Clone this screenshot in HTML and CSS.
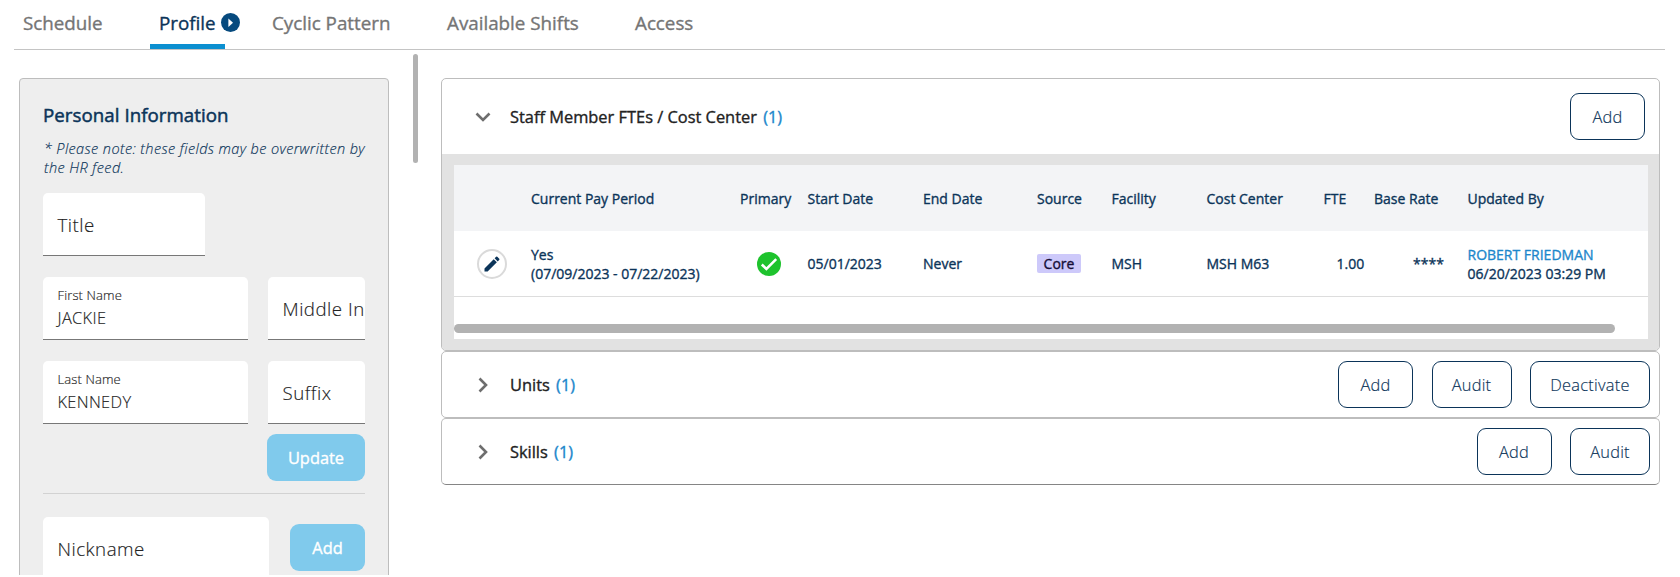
FILE: index.html
```html
<!DOCTYPE html>
<html lang="en">
<head>
<meta charset="utf-8">
<title>Staff Profile</title>
<link rel="stylesheet" href="styles.css">
</head>
<body>
<div class="page">
  <nav class="tabs">
    <a class="tab tab-schedule"><span>Schedule</span></a>
    <a class="tab tab-profile active"><span>Profile</span>
      <svg class="badge" viewBox="0 0 18 18"><circle cx="9" cy="9" r="9" fill="#064a7e"/><path d="M7 5.2 11.4 9.2 7 13.2z" fill="#fff"/></svg>
    </a>
    <a class="tab tab-cyclic"><span>Cyclic Pattern</span></a>
    <a class="tab tab-shifts"><span>Available Shifts</span></a>
    <a class="tab tab-access"><span>Access</span></a>
  </nav>
  <div class="columns">
    <aside class="sidebar">
      <section class="personal">
        <h2>Personal Information</h2>
        <p class="note">* Please note: these fields may be overwritten by<br>the HR feed.</p>
        <div class="field field-title"><span class="placeholder">Title</span></div>
        <div class="row">
          <div class="field"><label>First Name</label><span class="value">JACKIE</span></div>
          <div class="field small"><span class="placeholder">Middle In</span></div>
        </div>
        <div class="row">
          <div class="field"><label>Last Name</label><span class="value">KENNEDY</span></div>
          <div class="field small"><span class="placeholder">Suffix</span></div>
        </div>
        <div class="update-row"><button class="btn solid btn-update">Update</button></div>
        <div class="nick-row">
          <div class="field nickname"><span class="placeholder">Nickname</span></div>
          <button class="btn solid btn-add">Add</button>
        </div>
      </section>
    </aside>
    <div class="scroll-track"><div class="scroll-thumb"></div></div>
    <main class="panels">
      <section class="panel open">
        <header class="panel-head">
          <svg class="chevron" viewBox="0 0 16 16"><path d="M1.500 4.500 8 11l6.500-6.500" /></svg>
          <h3>Staff Member FTEs / Cost Center <em>(1)</em></h3>
          <div class="actions"><button class="btn btn-add">Add</button></div>
        </header>
        <div class="panel-body">
          <div class="table">
            <div class="tr th">
              <span></span><span>Current Pay Period</span><span>Primary</span><span>Start Date</span><span>End Date</span><span>Source</span><span>Facility</span><span>Cost Center</span><span>FTE</span><span>Base Rate</span><span>Updated By</span>
            </div>
            <div class="tr td">
              <span class="edit"><svg viewBox="0 0 24 24"><path d="M3 17.250V21h3.750L17.810 9.940l-3.750-3.750zM20.710 7.040a1 1 0 0 0 0-1.410l-2.340-2.340a1 1 0 0 0-1.410 0l-1.830 1.830 3.750 3.750z" fill="#0b3459"/></svg></span>
              <span>Yes<br>(07/09/2023 - 07/22/2023)</span>
              <span class="check"><svg viewBox="0 0 24 24"><circle cx="12" cy="12" r="12" fill="#1ec32d"/><path d="M4.800 12.500 9.400 17 19.200 7.200" fill="none" stroke="#fff" stroke-width="2.500"/></svg></span>
              <span>05/01/2023</span><span>Never</span>
              <span><b class="tag">Core</b></span>
              <span>MSH</span><span>MSH M63</span><span class="fte">1.00</span><span class="rate">****</span>
              <span><a class="link">ROBERT FRIEDMAN</a><br>06/20/2023 03:29 PM</span>
            </div>
            <div class="h-track"><div class="h-thumb"></div></div>
          </div>
        </div>
      </section>
      <section class="panel">
        <header class="panel-head">
          <svg class="chevron" viewBox="0 0 16 16"><path d="M4.500 1.500 11 8l-6.500 6.500"/></svg>
          <h3>Units <em>(1)</em></h3>
          <div class="actions"><button class="btn btn-add">Add</button><button class="btn btn-audit">Audit</button><button class="btn btn-deactivate">Deactivate</button></div>
        </header>
      </section>
      <section class="panel last">
        <header class="panel-head">
          <svg class="chevron" viewBox="0 0 16 16"><path d="M4.500 1.500 11 8l-6.500 6.500"/></svg>
          <h3>Skills <em>(1)</em></h3>
          <div class="actions"><button class="btn btn-add">Add</button><button class="btn btn-audit">Audit</button></div>
        </header>
      </section>
    </main>
  </div>
</div>
</body>
</html>
```
FILE: styles.css
```css
* { box-sizing: border-box; }
body { margin: 0; background: #fff; font-family: "Open Sans", sans-serif; color: #0b3459; }
.page { height: 575px; overflow: hidden; }

/* Tabs */
.tabs { display: flex; height: 50px; margin: 0 15px 0 14px; border-bottom: 1px solid #c4c4c4; font-size: 18.800px; line-height: 24px; color: #757575; -webkit-text-stroke: 0.35px; }
.tab { display: flex; padding-top: 11px; white-space: nowrap; }
.tab-schedule { width: 136px; padding-left: 9px; }
.tab-profile { width: 75px; padding-left: 9px; margin-right: 47px; border-bottom: 5px solid #0b8fd0; color: #0b3459; }
.tab-cyclic { width: 175px; }
.tab-shifts { width: 188px; }
.badge { flex: none; width: 19px; height: 19px; margin: 2px 0 0 5px; }

.columns { display: flex; align-items: flex-start; }

/* Personal information */
.sidebar { margin: 28px 0 0 19px; width: 370px; flex: none; }
.personal { height: 520px; padding: 22px 23px 0; background: #eee; border: 1px solid #bdbdbd; border-radius: 4px; }
h2 { margin: 0; font-size: 18.700px; letter-spacing: 0.05px; line-height: 28px; font-weight: 400; -webkit-text-stroke: 0.5px; }
.note { margin: 10px -5px 16px 1px; font-size: 14.500px; letter-spacing: 0.39px; line-height: 19px; font-style: italic; font-weight: 300; white-space: nowrap; -webkit-text-stroke: 0.15px; }
.row { display: flex; gap: 20px; margin-bottom: 21px; }
.field { display: flex; flex-direction: column; justify-content: center; flex: 1; height: 63px; padding-left: 14.500px; overflow: hidden; background: #fff; border-bottom: 1px solid #777; border-radius: 5px 5px 0 0; color: #222; font-weight: 300; white-space: nowrap; -webkit-text-stroke: 0.15px; }
.field-title { width: 162px; margin-bottom: 21px; }
.field.small { flex: 0 0 97px; }
.field label { font-size: 13px; letter-spacing: 0.12px; line-height: 20px; margin-top: -1px; }
.value { font-size: 16.400px; letter-spacing: 0.35px; line-height: 24px; margin-top: 1px; }
.placeholder { font-size: 18.700px; letter-spacing: 0.5px; line-height: 24px; margin-top: 1px; }
.update-row { display: flex; justify-content: flex-end; margin-top: -11px; padding-bottom: 12px; border-bottom: 1px solid #d2d2d2; }
.nick-row { display: flex; justify-content: space-between; align-items: center; margin-top: 23px; }
.nick-row .btn { margin-bottom: 2px; }
.nickname { flex: 0 0 226px; }

.btn { height: 47px; padding: 0; border: 1px solid #0b3459; border-radius: 9px; background: #fff; color: #0b3459; font: 300 16.400px "Open Sans", sans-serif; letter-spacing: 0.25px; -webkit-text-stroke: 0.15px; }
.btn-add { width: 75px; }
.btn-audit { width: 80px; }
.btn-deactivate { width: 120px; }
.btn-update { width: 98px; }
.solid { border: 0; background: #80caec; color: #fff; font-weight: 400; letter-spacing: 0; -webkit-text-stroke: 0.35px; }

.scroll-track { width: 5px; margin: 4px 23px 0 24px; flex: none; }
.scroll-thumb { height: 109px; border-radius: 3px; background: #b2b2b2; }

/* Panels */
.panels { width: 1219px; margin-top: 28px; flex: none; }
.panel { height: 67px; border: 1px solid #bdbdbd; border-radius: 5px; overflow: hidden; }
.panel.open { height: 273px; }
.panel.last { height: 67px; border-bottom-color: #858585; }
.panel-head { display: flex; align-items: center; height: 65px; padding: 0 9px 0 33px; }
.open .panel-head { height: 75px; padding-right: 14px; }
.chevron { width: 16px; height: 16px; margin-right: 19px; fill: none; stroke: #6e6e6e; stroke-width: 2.600; }
h3 { margin: 0; font-size: 16.400px; line-height: 24px; font-weight: 400; color: #222; -webkit-text-stroke: 0.35px; white-space: nowrap; }
h3 em { font-style: normal; color: #1d87cb; margin-left: 2px; }
.actions { display: flex; gap: 18.500px; margin-left: auto; }

.panel-body { height: 197px; padding: 11px 11px 11px 12px; background: #e2e2e2; }
.table { height: 174px; background: #fff; font-size: 14px; line-height: 19px; -webkit-text-stroke: 0.35px; }
.tr { display: grid; grid-template-columns: 77px 209px 67.500px 115.500px 114px 74.500px 95px 117px 50.500px 93.500px 1fr; align-items: center; white-space: nowrap; }
.th { height: 66px; background: #f3f4f6; }
.td { height: 66px; border-bottom: 1px solid #ddd; }
.edit { display: flex; align-items: center; justify-content: center; width: 30px; height: 30px; margin-left: 23px; border: 2px solid #dadada; border-radius: 50%; }
.edit svg { width: 20px; height: 20px; flex: none; }
.check { padding-left: 17px; line-height: 0; }
.check svg { width: 24px; height: 24px; }
.tag { display: inline-block; width: 44px; background: #cdc9fa; color: #150f38; text-align: center; font-weight: 400; border-radius: 2px; }
.fte { padding-left: 13px; }
.rate { padding-left: 39px; }
.link { color: #1d87cb; }
.h-track { padding-top: 27px; }
.h-thumb { width: 1161px; height: 9px; border-radius: 5px; background: #b2b2b2; }
```
